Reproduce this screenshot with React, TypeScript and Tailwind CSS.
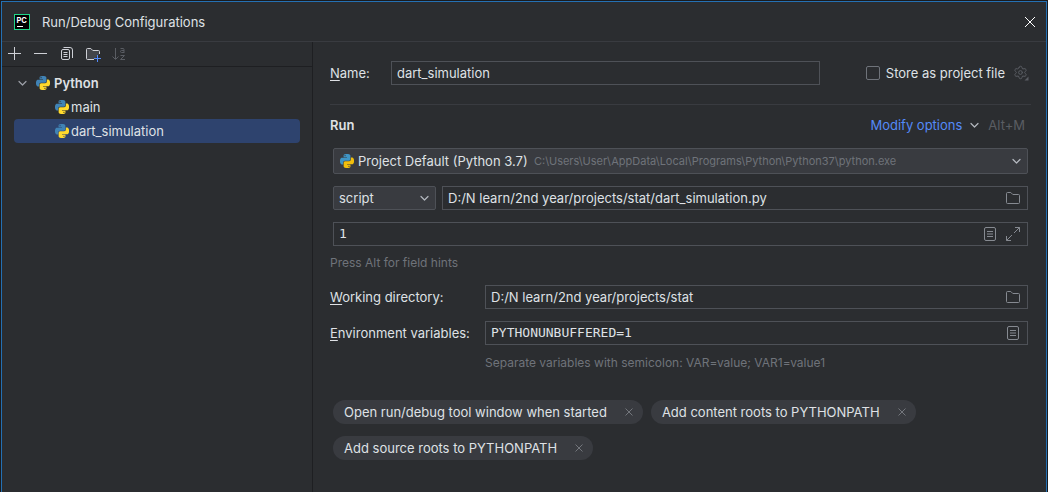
import { useState, type ReactNode } from 'react';
import { Settings } from 'lucide-react';

function PythonIcon({ bright = false }: { bright?: boolean }) {
  return (
    <svg viewBox="0 0 24 24" className="size-3.5 shrink-0" aria-hidden="true">
      <path
        className={bright ? 'fill-[#3f95c5]' : 'fill-[#4083b5]'}
        d="M14.25.18l.9.2.73.26.59.3.45.32.34.34.25.34.16.33.1.3.04.26.02.2-.01.13V8.5l-.05.63-.13.55-.21.46-.26.38-.3.31-.33.25-.35.19-.35.14-.33.1-.3.07-.26.04-.21.02H8.77l-.69.05-.59.14-.5.22-.41.27-.33.32-.27.35-.2.36-.15.37-.1.35-.07.32-.04.27-.02.21v3.06H3.17l-.21-.03-.28-.07-.32-.12-.35-.18-.36-.26-.36-.36-.35-.46-.32-.59-.28-.73-.21-.88-.14-1.05-.05-1.23.06-1.22.16-1.04.24-.87.32-.71.36-.57.4-.44.42-.33.42-.24.4-.16.36-.1.32-.05.24-.01h.16l.06.01h8.16v-.83H6.18l-.01-2.75-.02-.37.05-.34.11-.31.17-.28.25-.26.31-.23.38-.2.44-.18.51-.15.58-.12.64-.1.71-.06.77-.04.84-.02 1.27.05zm-6.3 1.98l-.23.33-.08.41.08.41.23.34.33.22.41.09.41-.09.33-.22.23-.34.08-.41-.08-.41-.23-.33-.33-.22-.41-.09-.41.09z"
      />
      <path
        className={bright ? 'fill-[#f2bf0c]' : 'fill-[#ffda2d]'}
        d="M21.1 6.11l.28.06.32.12.35.18.36.27.36.35.35.47.32.59.28.73.21.88.14 1.04.05 1.23-.06 1.23-.16 1.04-.24.86-.32.71-.36.57-.4.45-.42.33-.42.24-.4.16-.36.09-.32.05-.24.02-.16-.01h-8.22v.82h5.84l.01 2.76.02.36-.05.34-.11.31-.17.29-.25.25-.31.24-.38.2-.44.17-.51.15-.58.13-.64.09-.71.07-.77.04-.84.01-1.27-.04-1.07-.14-.9-.2-.73-.25-.59-.3-.45-.33-.34-.34-.25-.34-.16-.33-.1-.3-.04-.25-.02-.2.01-.13v-5.34l.05-.64.13-.54.21-.46.26-.38.3-.32.33-.24.35-.2.35-.14.33-.1.3-.06.26-.04.21-.02.13-.01h5.84l.69-.05.59-.14.5-.21.41-.28.33-.32.27-.35.2-.36.15-.36.1-.35.07-.32.04-.28.02-.21V6.07h2.09l.14.01zm-6.47 14.25l-.23.33-.08.41.08.41.23.33.33.23.41.08.41-.08.33-.23.23-.33.08-.41-.08-.41-.23-.33-.33-.23-.41-.08-.41.08z"
      />
    </svg>
  );
}

function Icon({ children, className = '' }: { children: ReactNode; className?: string }) {
  return (
    <svg viewBox="0 0 16 16" fill="none" stroke="currentColor" className={`size-4 shrink-0 ${className}`} aria-hidden="true">
      {children}
    </svg>
  );
}

const Chevron = ({ className = 'text-[#b4b8bf]' }: { className?: string }) => (
  <Icon className={className}>
    <path d="M5 6.500 8.500 10 12 6.500" strokeWidth="1.200" strokeLinecap="round" strokeLinejoin="round" />
  </Icon>
);

const FolderIcon = () => (
  <Icon>
    <path d="M1.5 3.5a1 1 0 0 1 1-1h3.3l2 2h5.7a1 1 0 0 1 1 1v7a1 1 0 0 1-1 1h-11a1 1 0 0 1-1-1z" />
  </Icon>
);

const ListIcon = () => (
  <Icon>
    <rect x="2.5" y="1.5" width="11" height="13" rx="1.5" />
    <path d="M5 5.5h6M5 8h6M5 10.5h6" />
  </Icon>
);

const ExpandIcon = () => (
  <Icon>
    <path d="M10 1.5h4.5V6M14.5 1.5 9 7M6 14.5H1.5V10M1.5 14.5 7 9" />
  </Icon>
);

function Field(props: { id: string; value: string; label?: string; mono?: boolean; className?: string; actions?: { label: string; icon: ReactNode }[] }) {
  const [value, setValue] = useState(props.value);
  return (
    <div className={`flex h-6 min-w-0 items-center gap-[7px] border border-[#4e5157] pr-1.5 pl-[5px] text-[#868a91] ${props.className ?? ''}`}>
      <input
        id={props.id}
        aria-label={props.label}
        value={value}
        onChange={(e) => setValue(e.target.value)}
        className={`h-full min-w-0 flex-1 bg-transparent pb-px text-[13px] text-[#dfe1e5] outline-none ${props.mono ? "font-['DejaVu_Sans_Mono','Liberation_Mono',monospace]" : ''}`}
      />
      {props.actions?.map((a) => (
        <button key={a.label} type="button" aria-label={a.label}>
          {a.icon}
        </button>
      ))}
    </div>
  );
}

function TreeItem({ name, selected = false }: { name: string; selected?: boolean }) {
  return (
    <li>
      <button
        type="button"
        aria-current={selected}
        className={`flex h-6 w-full items-center gap-0.5 rounded pl-[41px] text-left ${selected ? 'bg-[#2e436e]' : ''}`}
      >
        <PythonIcon />
        <span>{name}</span>
      </button>
    </li>
  );
}

function Chip({ text }: { text: string }) {
  return (
    <li className="flex h-6 items-center gap-3.5 rounded-full bg-[#393b40] pr-1.5 pl-[11px]">
      <span>{text}</span>
      <button type="button" aria-label={`Remove ${text}`} className="text-[#73767c]">
        <Icon>
          <path d="m4.5 4.5 7 7M11.5 4.5l-7 7" />
        </Icon>
      </button>
    </li>
  );
}

function Sidebar() {
  return (
    <aside className="flex w-[311px] shrink-0 flex-col border-r border-[#1e1f22]">
      <div className="flex h-[25px] items-center gap-2.5 border-b border-[#1e1f22] pl-[5px] text-[#ced0d6]">
        <button type="button" aria-label="Add">
          <Icon><path d="M7.5 1v13M1 7.5h13" /></Icon>
        </button>
        <button type="button" aria-label="Remove">
          <Icon><path d="M1 7.5h13" /></Icon>
        </button>
        <button type="button" aria-label="Copy">
          <Icon>
            <rect x="2.500" y="3.500" width="8" height="10" rx="1.500" />
            <path d="M4.500 1.500H11A2.500 2.500 0 0 1 13.500 4v8M4.500 6.500h4M4.500 8.500h4M4.500 10.500h4" />
          </Icon>
        </button>
        <button type="button" aria-label="New folder">
          <Icon>
            <path d="M9 13.500H2.500a1 1 0 0 1-1-1v-9a1 1 0 0 1 1-1h3.300l2 2h5.700a1 1 0 0 1 1 1V8" className="fill-[#43454a]" />
            <path d="M9 12.500h7M12.500 9v7" className="stroke-[#548af7]" />
          </Icon>
        </button>
        <button type="button" aria-label="Sort" disabled className="text-[#5a5d63]">
          <Icon>
            <path d="M4.500 2v11M1.500 10.500 4.500 13.500 7.500 10.500M9.500 9.500h4l-4 4h4.500" />
            <path d="M9.500 2.500h2.500q1 0 1 1v3.500M13 4.500h-2.500q-1 0-1 1t1 1H13" />
          </Icon>
        </button>
      </div>
      <ul className="px-3 pt-1">
        <li>
          <button type="button" aria-expanded="true" className="flex h-6 w-full items-center text-left font-semibold">
            <Chevron className="mr-1.5 text-[#9da0a8]" />
            <PythonIcon />
            <span className="pl-1">Python</span>
          </button>
          <ul>
            <TreeItem name="main" />
            <TreeItem name="dart_simulation" selected />
          </ul>
        </li>
      </ul>
    </aside>
  );
}

const FOLDER = { label: 'Browse', icon: <FolderIcon /> };
const LIST = { label: 'Edit list', icon: <ListIcon /> };

export default function App() {
  return (
    <div className="flex min-h-screen flex-col bg-[#1a1b1e] pr-px pl-px font-[Inter,'Noto_Sans',sans-serif] text-[13px] leading-4 text-[#dfe1e5]">
      <div className="h-px" />
      <div role="dialog" aria-labelledby="title" className="flex flex-1 flex-col border-x border-t border-[#2470b3] bg-[#2b2d30]">
        <header className="flex h-10 items-center border-b border-[#393b40] pr-2 pl-3">
          <svg viewBox="0 0 16 16" className="size-4" aria-hidden="true">
            <rect x="0.5" y="0.5" width="15" height="15" fill="#000" stroke="#21d789" />
            <text x="2.500" y="8.800" fontSize="7.500" fontWeight="700" fill="#fff">PC</text>
            <path d="M3 12.500h6" stroke="#fff" />
          </svg>
          <h1 id="title" className="flex-1 pl-3">Run/Debug Configurations</h1>
          <button type="button" aria-label="Close" className="text-white">
            <Icon><path d="m3 3 10 10M13 3 3 13" /></Icon>
          </button>
        </header>
        <div className="flex flex-1">
          <Sidebar />
          <main className="min-w-0 flex-1 pr-[15px] pl-[17px]">
            <div className="flex items-center pt-[19px]">
              <label htmlFor="name" className="w-[61px]"><u className="underline-offset-2">N</u>ame:</label>
              <Field id="name" value="dart_simulation" className="flex-1" />
              <label className="ml-[46px] flex items-center gap-1.5">
                <input type="checkbox" className="size-3.5 appearance-none rounded-xs border border-[#6f737a] checked:bg-[#3574f0]" />
                Store as project file
              </label>
              <button type="button" aria-label="Storage settings" className="mr-0.5 ml-2 text-[#5a5d63]">
                <Icon>
                  <Settings x={0} y={0} width={15} height={15} strokeWidth={1.6} />
                  <path d="M15.500 11.500v4h-4z" fill="currentColor" stroke="none" />
                </Icon>
              </button>
            </div>
            <hr className="mt-[19px] border-[#393b40]" />
            <div className="mb-1 flex h-[39px] items-center pr-1.5">
              <h2 className="flex-1 font-semibold">Run</h2>
              <button type="button" className="flex items-center gap-1 text-[#548af7]">
                Modify options
                <Chevron />
              </button>
              <span className="pl-1.5 text-[#5a5d63]">Alt+M</span>
            </div>
            <div className="flex flex-col gap-3 px-[3px]">
              <div className="flex h-[26px] items-center rounded-xs border border-[#4e5157] bg-[#393b40] pr-[3px] pl-1.5">
                <PythonIcon bright />
                <select aria-label="Interpreter" className="ml-1 appearance-none bg-transparent outline-none">
                  <option>Project Default (Python 3.7)</option>
                </select>
                <span className="min-w-0 flex-1 truncate pl-1.5 text-[11px] text-[#6f737a]">
                  C:\Users\User\AppData\Local\Programs\Python\Python37\python.exe
                </span>
                <Chevron />
              </div>
              <div className="flex gap-1.5">
                <div className="flex h-6 w-[103px] items-center rounded-xs border border-[#4e5157] bg-[#393b40] pr-[3px] pl-[5px]">
                  <select aria-label="Target type" className="min-w-0 flex-1 appearance-none bg-transparent outline-none">
                    <option>script</option>
                    <option>module</option>
                  </select>
                  <Chevron />
                </div>
                <Field id="script" label="Script path" value="D:/N learn/2nd year/projects/stat/dart_simulation.py" className="flex-1" actions={[FOLDER]} />
              </div>
              <Field id="params" label="Script parameters" value="1" mono actions={[LIST, { label: 'Expand', icon: <ExpandIcon /> }]} />
            </div>
            <p className="pt-[9px] text-xs text-[#6f737a]">Press Alt for field hints</p>
            <div className="grid grid-cols-[155px_1fr] items-center gap-y-3 pt-3.5 pr-[3px]">
              <label htmlFor="cwd"><u className="underline-offset-2">W</u>orking directory:</label>
              <Field id="cwd" value="D:/N learn/2nd year/projects/stat" actions={[FOLDER]} />
              <label htmlFor="env"><u className="underline-offset-2">E</u>nvironment variables:</label>
              <Field id="env" value="PYTHONUNBUFFERED=1" mono actions={[LIST]} />
            </div>
            <p className="pt-2.5 pl-[155px] text-xs text-[#6f737a]">Separate variables with semicolon: VAR=value; VAR1=value1</p>
            <ul className="flex flex-wrap gap-x-2 gap-y-3 px-[3px] pt-[29px] pb-7">
              <Chip text="Open run/debug tool window when started" />
              <Chip text="Add content roots to PYTHONPATH" />
              <Chip text="Add source roots to PYTHONPATH" />
            </ul>
          </main>
        </div>
      </div>
    </div>
  );
}
